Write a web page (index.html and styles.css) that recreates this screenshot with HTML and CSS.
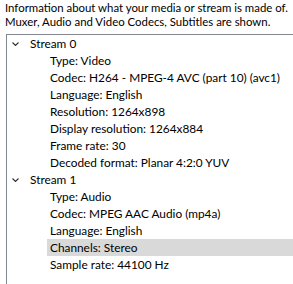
FILE: index.html
```html
<!DOCTYPE html>
<html>
<head>
<meta charset="utf-8">
<link rel="stylesheet" href="styles.css">
</head>
<body>
<div class="page">
  <p class="intro">Information about what your media or stream is made of.<br>Muxer, Audio and Video Codecs, Subtitles are shown.</p>
  <div class="tree">
    <div class="node">
      <svg class="chev" width="7" height="4" viewBox="0 0 7 4"><path d="M0.5 0.5 L3.5 3.5 L6.5 0.5" fill="none" stroke="#333" stroke-width="1.1"/></svg>
      <span>Stream 0</span>
    </div>
    <div class="leaf">Type: Video</div>
    <div class="leaf">Codec: H264 - MPEG-4 AVC (part 10) (avc1)</div>
    <div class="leaf">Language: English</div>
    <div class="leaf">Resolution: 1264x898</div>
    <div class="leaf">Display resolution: 1264x884</div>
    <div class="leaf">Frame rate: 30</div>
    <div class="leaf">Decoded format: Planar 4:2:0 YUV</div>
    <div class="node">
      <svg class="chev" width="7" height="4" viewBox="0 0 7 4"><path d="M0.5 0.5 L3.5 3.5 L6.5 0.5" fill="none" stroke="#333" stroke-width="1.1"/></svg>
      <span>Stream 1</span>
    </div>
    <div class="leaf">Type: Audio</div>
    <div class="leaf">Codec: MPEG AAC Audio (mp4a)</div>
    <div class="leaf">Language: English</div>
    <div class="leaf selected">Channels: Stereo</div>
    <div class="leaf">Sample rate: 44100 Hz</div>
  </div>
</div>
</body>
</html>
```
FILE: styles.css
```css
html, body {
  margin: 0;
  padding: 0;
  background: #ffffff;
  overflow: hidden;
}
.page {
  width: 293px;
  height: 284px;
  font-family: Lato, "Liberation Sans", sans-serif;
  font-size: 12px;
  color: #000;
}
.intro {
  margin: 0;
  padding: 1px 0 0 5px;
  font-size: 11.4px;
  line-height: 14px;
  white-space: nowrap;
}
.tree {
  margin: 5px 0 0 6px;
  border-top: 1px solid #828790;
  border-left: 1px solid #828790;
  height: 260px;
  font-size: 11.85px;
}
.node {
  height: 17px;
  display: flex;
  align-items: center;
}
.chev {
  margin-left: 5px;
  margin-right: 11px;
  flex: none;
}
.leaf {
  height: 17px;
  line-height: 17px;
  margin-left: 40px;
  padding-left: 3px;
  white-space: nowrap;
}
.selected {
  background: #d9d9d9;
}
```
